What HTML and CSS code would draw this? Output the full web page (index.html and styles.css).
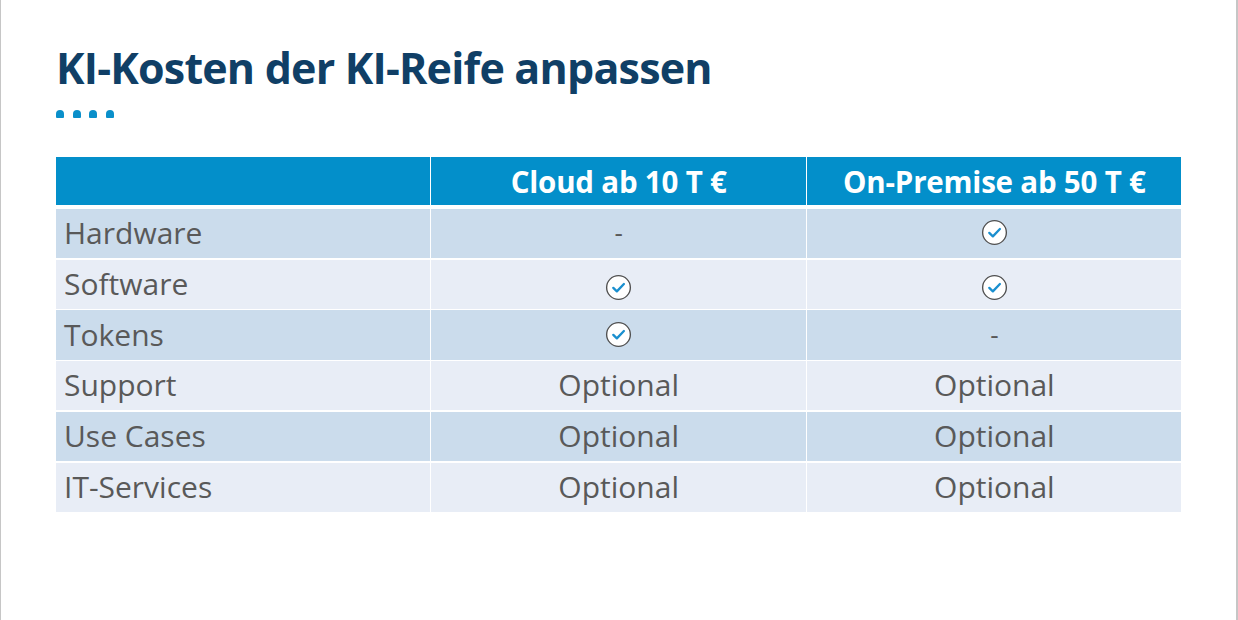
FILE: index.html
```html
<!DOCTYPE html>
<html lang="de">
<head>
<meta charset="utf-8">
<title>KI-Kosten der KI-Reife anpassen</title>
<link rel="stylesheet" href="styles.css">
</head>
<body>
<div class="slide">
  <h1 class="title">KI-Kosten der KI-Reife anpassen</h1>
  <div class="dots"><span></span><span></span><span></span><span></span></div>
  <div class="table">
    <div class="head">
      <div class="hcell"></div>
      <div class="hcell">Cloud ab 10 T €</div>
      <div class="hcell">On-Premise ab 50 T €</div>
    </div>
    <div class="body">
      <div class="row dark">
        <div class="cell label">Hardware</div>
        <div class="cell dash">-</div>
        <div class="cell"><svg class="check" viewBox="0 0 28 28"><circle cx="14" cy="14" r="12.3"/><path d="M8.6 14.4 L12.3 18 L19.6 10.4"/></svg></div>
      </div>
      <div class="row light">
        <div class="cell label">Software</div>
        <div class="cell"><svg class="check low" viewBox="0 0 28 28"><circle cx="14" cy="14" r="12.3"/><path d="M8.6 14.4 L12.3 18 L19.6 10.4"/></svg></div>
        <div class="cell"><svg class="check low" viewBox="0 0 28 28"><circle cx="14" cy="14" r="12.3"/><path d="M8.6 14.4 L12.3 18 L19.6 10.4"/></svg></div>
      </div>
      <div class="row dark">
        <div class="cell label">Tokens</div>
        <div class="cell"><svg class="check" viewBox="0 0 28 28"><circle cx="14" cy="14" r="12.3"/><path d="M8.6 14.4 L12.3 18 L19.6 10.4"/></svg></div>
        <div class="cell dash">-</div>
      </div>
      <div class="row light">
        <div class="cell label">Support</div>
        <div class="cell">Optional</div>
        <div class="cell">Optional</div>
      </div>
      <div class="row dark">
        <div class="cell label">Use Cases</div>
        <div class="cell">Optional</div>
        <div class="cell">Optional</div>
      </div>
      <div class="row light">
        <div class="cell label">IT-Services</div>
        <div class="cell">Optional</div>
        <div class="cell">Optional</div>
      </div>
    </div>
  </div>
</div>
</body>
</html>
```
FILE: styles.css
```css
html, body {
  margin: 0;
  padding: 0;
  background: #ffffff;
}
.slide {
  box-sizing: border-box;
  width: 1238px;
  height: 620px;
  border-left: 1px solid #c6c6c6;
  border-right: 2px solid #c6c6c6;
  padding: 38px 0 0 55px;
  font-family: "Open Sans", "Noto Sans", sans-serif;
}
.title {
  margin: 0;
  font-size: 43px;
  line-height: 60px;
  font-weight: 700;
  color: #103f66;
  letter-spacing: -0.8px;
}
.dots {
  display: flex;
  gap: 8.7px;
  margin-top: 12px;
  height: 9px;
}
.dots span {
  width: 8px;
  height: 8px;
  background: #0a8fca;
  border-radius: 4px 4px 1px 1px;
}
.table {
  margin-top: 38px;
  width: 1125px;
}
.head, .row {
  display: grid;
  grid-template-columns: 374px 375px 374px;
  column-gap: 1.2px;
}
.head {
  height: 48px;
  margin-bottom: 3.8px;
}
.hcell {
  background: #038fca;
  color: #ffffff;
  font-weight: 700;
  font-size: 29.5px;
  letter-spacing: -0.2px;
  display: flex;
  align-items: center;
  justify-content: center;
  padding-top: 1px;
}
.body {
  display: flex;
  flex-direction: column;
  gap: 1.5px;
}
.row {
  height: 49.3px;
}
.row.dark .cell { background: #cbdcec; }
.row.light .cell { background: #e8edf6; }
.cell {
  display: flex;
  align-items: center;
  justify-content: center;
  color: #595959;
  font-size: 30px;
  letter-spacing: 0;
  padding-bottom: 2px;
}
.cell.dash {
  font-size: 26px;
}
.cell.label {
  justify-content: flex-start;
  padding-left: 8px;
}
.check {
  width: 27px;
  height: 27px;
}
.check.low {
  margin-top: 8px;
}
.check circle {
  fill: #ffffff;
  stroke: #4f4f4f;
  stroke-width: 1.4;
}
.check path {
  fill: none;
  stroke: #1a8fcf;
  stroke-width: 2.4;
  stroke-linecap: round;
  stroke-linejoin: round;
}
```
